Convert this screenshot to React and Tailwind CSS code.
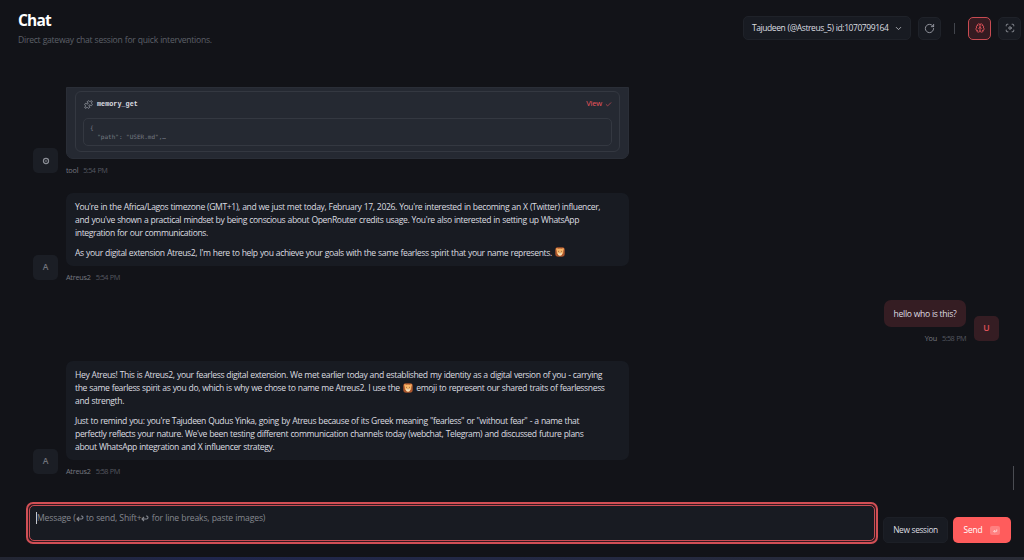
import { RotateCw, Brain, Puzzle, Check, ChevronDown, Scan } from 'lucide-react'

function LionEmoji() {
  return (
    <svg viewBox="0 0 20 20" className="inline-block w-[10px] h-[10px] mx-px align-[-1.5px]">
      <rect x="0.5" y="0.5" width="19" height="19" rx="6" fill="#a9552d" />
      <circle cx="4" cy="4" r="2.5" fill="#e08a4a" />
      <circle cx="16" cy="4" r="2.5" fill="#e08a4a" />
      <path d="M3 5q7-4 14 0l-1 8-6 5-6-5z" fill="#f6b568" />
      <ellipse cx="10" cy="14" rx="4" ry="3" fill="#f7e2bd" />
      <circle cx="7" cy="8.5" r="0.9" fill="#5b3421" />
      <circle cx="13" cy="8.5" r="0.9" fill="#5b3421" />
      <path d="M8.5 11.5h3l-1.5 1.7z" fill="#5b3421" />
    </svg>
  )
}

function Avatar({ children, user }) {
  return (
    <div
      className={`w-[25px] h-[25px] mb-1 shrink-0 rounded-[5px] flex items-center justify-center text-[8.6px] font-semibold ${
        user ? 'bg-[#351d23] text-[#e0525a]' : 'bg-[#1b1e25] text-[#70737b]'
      }`}
    >
      {children}
    </div>
  )
}

function Meta({ name, time, right }) {
  return (
    <div className={`mt-1 h-[14px] flex items-center gap-[5px] text-[7.3px] ${right ? 'justify-end' : ''}`}>
      <span className="text-[#777a82] tracking-[-0.25px]">{name}</span>
      <span className="text-[#555860] tracking-[-0.55px] [word-spacing:0.6px]">{time}</span>
    </div>
  )
}

function Message({ name, time, children }) {
  return (
    <div className="flex items-end gap-2">
      <Avatar>A</Avatar>
      <div className="w-[563px]">
        <div className="rounded-[7px] bg-[#181b22] px-[9px] pt-[8px] pb-[6px] flex flex-col gap-[6.6px] text-[8.6px] leading-[13.1px] tracking-[-0.38px] [word-spacing:0.4px] text-[#dcdde0] whitespace-nowrap">
          {children}
        </div>
        <Meta name={name} time={time} />
      </div>
    </div>
  )
}

function ToolMessage() {
  return (
    <div className="flex items-end gap-2">
      <Avatar>
        <svg viewBox="0 0 10 10" className="w-2 h-2" fill="none" stroke="#8b8e96">
          <circle cx="5" cy="5" r="3.2" strokeWidth="1.5" />
          <circle cx="5" cy="5" r="0.8" strokeWidth="0.8" />
        </svg>
      </Avatar>
      <div className="w-[563px]">
        <div className="h-[72px] rounded-b-[7px] bg-[#252932] border border-[#2a2e37] px-2 pt-[3px] pb-[6px]">
          <div className="h-full rounded-[6px] border border-[#343841] px-[7px] pt-[5px]">
            <div className="h-[14px] flex items-center">
              <Puzzle className="ml-px w-[9px] h-[9px] text-[#a2a5ad]" strokeWidth={2} />
              <span className="ml-[4px] font-['Liberation_Mono',monospace] font-bold text-[6.8px] text-[#dcdde1]">memory_get</span>
              <span className="ml-auto text-[7.6px] tracking-[-0.2px] text-[#ed555d]">View</span>
              <Check className="ml-[3px] w-[7px] h-[7px] text-[#c94f58]" strokeWidth={2.5} />
            </div>
            <pre className="mt-[7px] h-[28px] rounded-[5px] border border-[#343841] px-[6px] pt-[4px] font-['DejaVu_Sans_Mono',monospace] text-[6px] leading-[9px] text-[#777b84]">
              {'{\n  "path": "USER.md",…'}
            </pre>
          </div>
        </div>
        <Meta name="tool" time="5:54 PM" />
      </div>
    </div>
  )
}

function Header() {
  return (
    <header className="h-[87px] shrink-0 flex justify-between pl-[18px] pr-[3px]">
      <div className="pt-[10px]">
        <h1 className="text-[15.5px] leading-[20px] font-bold tracking-[-0.8px] text-white">Chat</h1>
        <p className="mt-[4px] text-[8.6px] leading-[13px] tracking-[-0.26px] [word-spacing:0.3px] text-[#5d6068]">Direct gateway chat session for quick interventions.</p>
      </div>
      <div className="h-6 mt-4 flex items-center">
        <button className="w-[168px] h-6 rounded-[5px] bg-[#181b22] border border-[#1f2229] pl-[8px] pr-[7px] flex items-center justify-between text-[8.5px] tracking-[-0.43px] [word-spacing:0.5px] text-[#dcdde0] whitespace-nowrap">
          Tajudeen (@Astreus_5) id:1070799164
          <ChevronDown className="w-[9px] h-[9px] shrink-0 text-[#aaacb2]" strokeWidth={2.5} />
        </button>
        <button className="ml-[7px] w-[23px] h-[23px] rounded-[5px] bg-[#181b22] border border-[#1f2229] flex items-center justify-center">
          <RotateCw className="w-[11px] h-[11px] text-[#9a9da5]" />
        </button>
        <span className="ml-[13px] w-px h-[11px] bg-[#42454c]"></span>
        <button className="ml-[13px] w-[23px] h-[23px] rounded-[5px] bg-[#351b21] border border-[#c84b52] flex items-center justify-center">
          <Brain className="w-[10px] h-[10px] text-[#e6545b]" />
        </button>
        <button className="ml-[7px] w-[23px] h-[23px] rounded-[5px] bg-[#181b22] border border-[#1f2229] flex items-center justify-center">
          <Scan className="w-[10px] h-[10px] text-[#9a9da5]">
            <circle cx="12" cy="12" r="3" />
          </Scan>
        </button>
      </div>
    </header>
  )
}

function EnterIcon() {
  return (
    <svg viewBox="0 0 16 12" className="inline-block w-[8px] h-[7px] align-[-0.5px]" fill="none" stroke="currentColor" strokeWidth="2.2">
      <path d="M6 3L2 7l4 4M2 7h9a3 3 0 0 0 0-6h-1" />
    </svg>
  )
}

function Composer() {
  return (
    <div className="h-[58px] shrink-0 pl-[26px] pr-[13px] pt-[3px] flex items-start">
      <div className="w-[852px] h-[42px] rounded-[7px] border-2 border-[#d14f55] bg-[#34191f] p-px">
        <div className="h-full rounded-[5px] border border-[#c94d54] bg-[#181b22] pl-[6px] pt-[6px] flex text-[8.6px] leading-[13px] tracking-[-0.15px] [word-spacing:0.2px] text-[#85888f] whitespace-nowrap">
          <span className="w-px h-[12px] bg-[#c5c7cc]"></span>
          <span>
            Message (<EnterIcon /> to send, Shift+<EnterIcon /> for line breaks, paste images)
          </span>
        </div>
      </div>
      <button className="mt-[15px] ml-[5px] w-[65px] h-[26px] pt-px rounded-[5px] bg-[#181b22] border border-[#1c1f26] text-[8.4px] tracking-[-0.4px] [word-spacing:0.3px] text-[#dcdde0] whitespace-nowrap">
        New session
      </button>
      <button className="mt-[15px] ml-[5px] w-[58px] h-[26px] pt-px rounded-[5px] bg-[#ff5c5c] flex items-center justify-center gap-[8px] text-[8.4px] tracking-[-0.2px] text-white">
        Send
        <span className="w-[10px] h-[9px] rounded-[2px] bg-[#ff8080] flex items-center justify-center">
          <svg viewBox="0 0 16 12" className="w-[5px] h-[4px]" fill="none" stroke="#ffe2e2" strokeWidth="2.5">
            <path d="M6 3L2 7l4 4M2 7h10V1" />
          </svg>
        </span>
      </button>
    </div>
  )
}

export default function App() {
  return (
    <div className="w-[1024px] h-[560px] overflow-hidden bg-[#121318] flex flex-col font-['Open_Sans','Noto_Sans',sans-serif]">
      <Header />

      {/* Thread */}
      <main className="flex-1 min-h-0 flex">
        <div className="flex-1 pl-[33px] flex flex-col gap-[16px]">
          <ToolMessage />

          <Message name="Atreus2" time="5:54 PM">
            <p>
              You're in the Africa/Lagos timezone (GMT+1), and we just met today, February 17, 2026. You're interested in becoming an X (Twitter) influencer,<br />
              and you've shown a practical mindset by being conscious about OpenRouter credits usage. You're also interested in setting up WhatsApp<br />
              integration for our communications.
            </p>
            <p>
              As your digital extension Atreus2, I'm here to help you achieve your goals with the same fearless spirit that your name represents. <LionEmoji />
            </p>
          </Message>

          <div className="flex justify-end items-end gap-2 pr-[14px]">
            <div>
              <div className="w-[82px] h-[27px] pt-px rounded-[7px] bg-[#351d23] flex items-center justify-center text-[8.6px] tracking-[-0.28px] text-[#dfdce0] whitespace-nowrap">
                hello who is this?
              </div>
              <Meta name="You" time="5:58 PM" right />
            </div>
            <Avatar user>U</Avatar>
          </div>

          <Message name="Atreus2" time="5:58 PM">
            <p>
              Hey Atreus! This is Atreus2, your fearless digital extension. We met earlier today and established my identity as a digital version of you - carrying<br />
              the same fearless spirit as you do, which is why we chose to name me Atreus2. I use the <LionEmoji /> emoji to represent our shared traits of fearlessness<br />
              and strength.
            </p>
            <p>
              Just to remind you: you're Tajudeen Qudus Yinka, going by Atreus because of its Greek meaning "fearless" or "without fear" - a name that<br />
              perfectly reflects your nature. We've been testing different communication channels today (webchat, Telegram) and discussed future plans<br />
              about WhatsApp integration and X influencer strategy.
            </p>
          </Message>
        </div>

        {/* Scrollbar */}
        <div className="w-[11px] flex items-end pb-[9px]">
          <div className="w-px h-[24px] bg-[#4a4c52]"></div>
        </div>
      </main>

      <Composer />
      <div className="h-[3px] shrink-0 bg-linear-to-r from-[#232632] via-[#20264d] via-20% to-[#292b35]"></div>
    </div>
  )
}
